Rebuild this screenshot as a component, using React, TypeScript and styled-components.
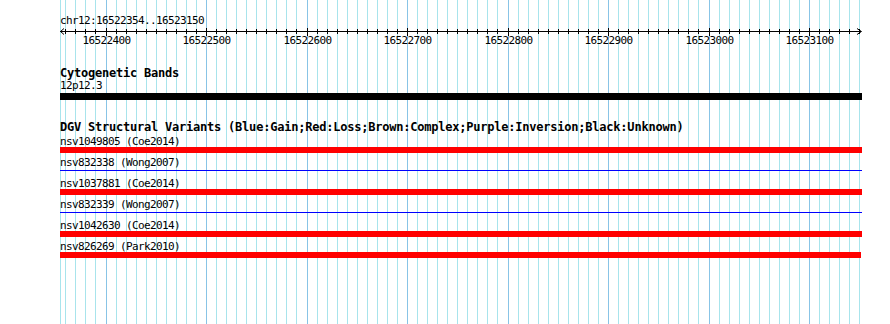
import React from "react";
import styled, { createGlobalStyle } from "styled-components";

const START = 16522354;
const END = 16523150;
const LEFT = 60;
const TRACK_WIDTH = 802;

// bp -> page pixel column
const toPx = (bp: number) => Math.floor(59.8 + (bp - START) * 1.005);

type Kind = "loss" | "gain";

interface Variant {
  name: string;
  kind: Kind;
  width?: number;
}

const variants: Variant[] = [
  { name: "nsv1049805 (Coe2014)", kind: "loss" },
  { name: "nsv832338 (Wong2007)", kind: "gain" },
  { name: "nsv1037881 (Coe2014)", kind: "loss" },
  { name: "nsv832339 (Wong2007)", kind: "gain" },
  { name: "nsv1042630 (Coe2014)", kind: "loss" },
  { name: "nsv826269 (Park2010)", kind: "loss", width: 801 },
];

const stops: number[] = [];
for (let b = Math.ceil(START / 10) * 10; b <= END; b += 10) stops.push(b);

const MONO = `"DejaVu Sans Mono", "Liberation Mono", monospace`;

const GlobalStyle = createGlobalStyle`
  html, body {
    margin: 0;
    padding: 0;
    background: #fff;
  }
`;

const Canvas = styled.div`
  position: relative;
  width: 890px;
  height: 324px;
  overflow: hidden;
  background: #fff;
`;

const GridLayer = styled.svg`
  position: absolute;
  top: 0;
  left: 0;
`;

const Content = styled.div`
  position: relative;
  z-index: 1;
  padding: 15px 0 0 ${LEFT}px;
  width: ${TRACK_WIDTH}px;
  color: #000;
`;

const Plain = styled.div<{ lh?: number }>`
  font-family: ${MONO};
  font-size: 11px;
  letter-spacing: -0.62px;
  line-height: ${(p) => p.lh ?? 12}px;
  white-space: pre;
`;

const SectionTitle = styled.div<{ gap: number }>`
  margin-top: ${(p) => p.gap}px;
  font-family: ${MONO};
  font-weight: bold;
  font-size: 12px;
  letter-spacing: -0.22px;
  line-height: 13px;
  white-space: pre;
`;

const RulerSvg = styled.svg`
  display: block;
  margin-top: 1px;
  overflow: visible;

  text {
    font-family: ${MONO};
    font-size: 11px;
    letter-spacing: -0.62px;
  }
`;

const BandBar = styled.div`
  margin-top: 1px;
  height: 7px;
  width: ${TRACK_WIDTH}px;
  background: #000;
`;

const TrackList = styled.div`
  margin-top: 2px;
  display: flex;
  flex-direction: column;
`;

const Row = styled.div`
  display: flex;
  flex-direction: column;
  height: 21px;
`;

// loss: solid 6px red box; gain: thin blue line through the middle of the glyph row
const Glyph = styled.div<{ kind: Kind; w: number }>`
  width: ${(p) => p.w}px;
  height: ${(p) => (p.kind === "loss" ? 6 : 1)}px;
  margin-top: ${(p) => (p.kind === "loss" ? 0 : 2)}px;
  background-color: ${(p) => (p.kind === "loss" ? "#ff0000" : "#0000ff")};
`;

const Grid = () => (
  <GridLayer width={890} height={324} shapeRendering="crispEdges">
    <rect x={LEFT} y={0} width={1} height={324} fill="#a8e4ec" />
    {stops.map((b) => (
      <rect
        key={b}
        x={toPx(b)}
        y={0}
        width={1}
        height={324}
        fill={b % 100 === 0 ? "#88c4e6" : "#a8e4ec"}
      />
    ))}
  </GridLayer>
);

const Ruler = () => {
  const last = TRACK_WIDTH - 1;
  return (
    <RulerSvg width={TRACK_WIDTH} height={20}>
      <g stroke="#000" strokeWidth={1} fill="none" shapeRendering="crispEdges">
        <line x1={0} y1={3.5} x2={last} y2={3.5} />
        {stops.map((b) => {
          const x = toPx(b) - LEFT + 0.5;
          const major = b % 100 === 0;
          return <line key={b} x1={x} y1={major ? 0 : 1} x2={x} y2={major ? 8 : 6} />;
        })}
      </g>
      <g stroke="#000" strokeWidth={1} fill="none">
        <polyline points="4,0.5 0.5,3.5 4,6.5" />
        <polyline points={`${last - 4},0.5 ${last + 0.5},3.5 ${last - 4},6.5`} />
      </g>
      {stops
        .filter((b) => b % 100 === 0)
        .map((b) => (
          <text key={b} x={toPx(b) - LEFT + 0.5} y={16} textAnchor="middle" fill="#000">
            {b}
          </text>
        ))}
    </RulerSvg>
  );
};

export default function App() {
  return (
    <Canvas>
      <GlobalStyle />
      <Grid />
      <Content>
        <Plain>{`chr12:${START}..${END}`}</Plain>
        <Ruler />

        <SectionTitle gap={19}>Cytogenetic Bands</SectionTitle>
        <Plain>12p12.3</Plain>
        <BandBar />

        <SectionTitle gap={21}>
          DGV Structural Variants (Blue:Gain;Red:Loss;Brown:Complex;Purple:Inversion;Black:Unknown)
        </SectionTitle>
        <TrackList>
          {variants.map((v) => (
            <Row key={v.name}>
              <Plain lh={11}>{v.name}</Plain>
              <Glyph kind={v.kind} w={v.width ?? TRACK_WIDTH} />
            </Row>
          ))}
        </TrackList>
      </Content>
    </Canvas>
  );
}
